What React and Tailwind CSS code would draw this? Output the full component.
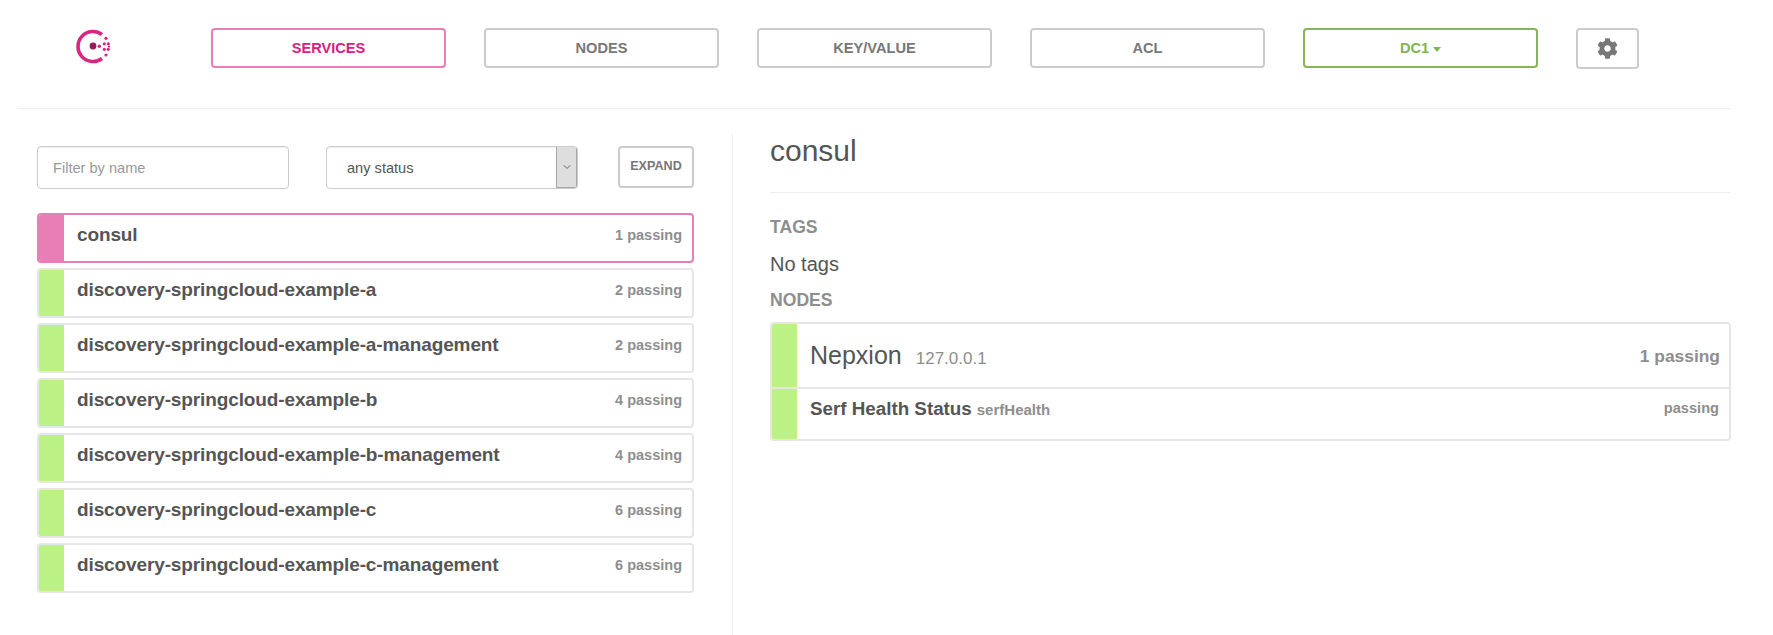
import React from "react";
import { FaCog } from "react-icons/fa";
import { ChevronDown } from "lucide-react";

function Logo() {
  const dots = [
    [99.3, 46.3, 1.7], [104.3, 43.8, 1.6], [104.3, 49.3, 1.6], [108.3, 43.8, 1.6], [108.3, 49.3, 1.6],
    [106, 38.3, 1.6], [106, 55, 1.6], [109, 46.6, 1.1],
  ];
  return (
    <svg width="60" height="50" viewBox="70 22 60 50" className="block">
      <path d="M102 34.5 A15 15 0 1 0 102 58.5" fill="none" stroke="#d62783" strokeWidth="3.6" />
      <circle cx="93" cy="46" r="3.4" fill="#961d59" />
      {dots.map(([x, y, r], i) => (
        <circle key={i} cx={x} cy={y} r={r} fill="#d62783" />
      ))}
    </svg>
  );
}

function NavButton({ children, tone = "gray" }) {
  const tones = {
    gray: "border-[#cccccc] text-[#777777]",
    pink: "border-[#e87eb5] text-[#d9207f]",
    green: "border-[#86b557] text-[#7fb552]",
  };
  return (
    <a className={`flex h-10 w-[235px] shrink-0 items-center justify-center rounded-[4px] border-2 bg-white pt-[1px] text-[14.6px] font-bold ${tones[tone]}`}>
      {children}
    </a>
  );
}

const services = [
  ["consul", "1 passing", true],
  ["discovery-springcloud-example-a", "2 passing"],
  ["discovery-springcloud-example-a-management", "2 passing"],
  ["discovery-springcloud-example-b", "4 passing"],
  ["discovery-springcloud-example-b-management", "4 passing"],
  ["discovery-springcloud-example-c", "6 passing"],
  ["discovery-springcloud-example-c-management", "6 passing"],
];

function ServiceRow({ name, count, active }) {
  return (
    <div className={`flex h-[50px] overflow-hidden rounded-[4px] border-2 bg-white ${active ? "border-[#e87eb5]" : "border-[#e6e6e6]"}`}>
      <div className={`w-[25px] shrink-0 ${active ? "bg-[#e87eb5]" : "bg-[#bcf185]"}`} />
      <div className="flex flex-1 items-start justify-between pl-[13px] pr-[10px] pt-[7px]">
        <span className="text-[19px] leading-[26px] font-bold tracking-[-0.12px] text-[#555555]">{name}</span>
        <span className="pt-[1px] text-[14.5px] leading-[24px] font-bold text-[#8e8e8e]">{count}</span>
      </div>
    </div>
  );
}

export default function App() {
  return (
    <div className="h-[635px] w-[1773px] overflow-hidden bg-white font-['Liberation_Sans',Arial,sans-serif] text-[#555555]">
      <header className="mx-[18px] h-[109px] w-[1713px] border-b border-[#eeeeee] pt-[28px]">
        <div className="flex items-start">
          <div className="ml-[52px] w-[141px] -mt-[6px]">
            <Logo />
          </div>
          <div className="flex gap-[38px]">
            <NavButton tone="pink">SERVICES</NavButton>
            <NavButton>NODES</NavButton>
            <NavButton>KEY/VALUE</NavButton>
            <NavButton>ACL</NavButton>
            <NavButton tone="green">
              DC1
              <span className="ml-[4px] mt-[1px] h-0 w-0 border-x-[4.5px] border-t-[5px] border-x-transparent border-t-[#7fb552]" />
            </NavButton>
            <a className="flex h-[41px] w-[63px] items-center justify-center rounded-[4px] border-2 border-[#cccccc] text-[#777777]">
              <FaCog className="h-[21px] w-[21px]" />
            </a>
          </div>
        </div>
      </header>

      <main className="flex">
        <section className="w-[732px] shrink-0 pl-[37px] pr-[38px] pt-[37px]">
          <div className="flex items-start">
            <input
              placeholder="Filter by name"
              className="h-[43px] w-[252px] rounded-[4px] border border-[#cccccc] px-[15px] text-[14.6px] text-[#555555] shadow-[inset_0_1px_1px_rgba(0,0,0,0.075)] outline-none placeholder:text-[#999999]"
            />
            <div className="ml-[37px] flex h-[43px] w-[252px] overflow-hidden rounded-[4px] border border-[#cccccc] shadow-[inset_0_1px_1px_rgba(0,0,0,0.075)]">
              <span className="flex flex-1 items-center pl-[20px] pt-[2px] text-[14.6px] text-[#555555]">any status</span>
              <span className="flex w-[21px] items-center justify-center border-x border-b border-[#a8a8a8] bg-[#dedede]">
                <ChevronDown className="h-[12px] w-[12px] text-[#444444]" strokeWidth={1.5} />
              </span>
            </div>
            <button className="ml-[40px] flex h-[42px] w-[76px] items-center justify-center rounded-[4px] border-2 border-[#cccccc] pb-[1px] text-[12.6px] font-bold text-[#777777]">
              EXPAND
            </button>
          </div>
          <div className="mt-[24px] flex flex-col gap-[5px]">
            {services.map(([n, c, a]) => (
              <ServiceRow key={n} name={n} count={c} active={a} />
            ))}
          </div>
        </section>

        <section className="mt-[24px] h-[502px] w-[999px] border-l border-[#eeeeee] pl-[37px]">
          <div className="w-[961px]">
            <h2 className="h-[60px] border-b border-[#eeeeee] pt-[1px] text-[30px] leading-[34px] font-normal text-[#555555]">consul</h2>
            <h4 className="mt-[24px] text-[17.6px] leading-[20px] font-bold text-[#8e8e8e]">TAGS</h4>
            <p className="mt-[14px] text-[20px] leading-[26px] text-[#555555]">No tags</p>
            <h4 className="mt-[13px] text-[17.6px] leading-[20px] font-bold text-[#8e8e8e]">NODES</h4>
            <div className="mt-[12px] h-[119px] overflow-hidden rounded-[4px] border-2 border-[#e6e6e6]">
              <div className="flex h-[65px] border-b-2 border-[#e6e6e6]">
                <div className="w-[25px] shrink-0 bg-[#bcf185]" />
                <div className="flex flex-1 items-center justify-between pl-[13px] pr-[9px]">
                  <div className="flex items-baseline">
                    <span className="text-[25px] leading-[32px] text-[#555555]">Nepxion</span>
                    <span className="ml-[14px] text-[17px] leading-[26px] text-[#8e8e8e]">127.0.0.1</span>
                  </div>
                  <span className="text-[17.4px] leading-[26px] font-bold text-[#8e8e8e]">1 passing</span>
                </div>
              </div>
              <div className="flex h-[50px]">
                <div className="w-[25px] shrink-0 bg-[#bcf185]" />
                <div className="flex flex-1 items-start justify-between pl-[13px] pr-[10px] pt-[7px]">
                  <div className="flex items-baseline">
                    <span className="text-[18.8px] leading-[26px] font-bold text-[#555555]">Serf Health Status</span>
                    <span className="ml-[5px] text-[15px] leading-[20px] font-bold text-[#8e8e8e]">serfHealth</span>
                  </div>
                  <span className="pt-[2px] text-[14.6px] leading-[20px] font-bold text-[#8e8e8e]">passing</span>
                </div>
              </div>
            </div>
          </div>
        </section>
      </main>
    </div>
  );
}
